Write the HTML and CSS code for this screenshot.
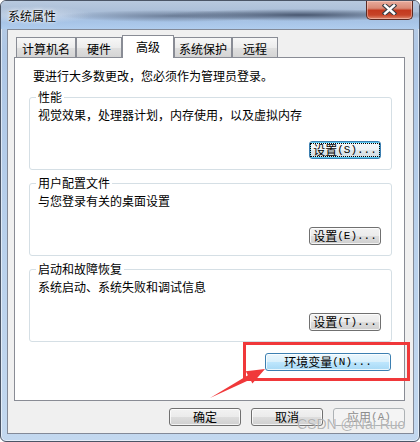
FILE: index.html
```html
<!DOCTYPE html>
<html lang="zh-CN">
<head>
<meta charset="utf-8">
<title>系统属性</title>
<link rel="stylesheet" href="styles.css">
</head>
<body>
<div class="window">
  <div class="titlebar">
    <span class="title">系统属性</span>
    <div class="close">
      <svg width="15" height="11" viewBox="0 0 15 11">
        <path d="M3 1.5 L12 9.5 M12 1.5 L3 9.5" stroke="#3b3f46" stroke-width="4.6" stroke-linecap="square" fill="none"/>
        <path d="M3 1.5 L12 9.5 M12 1.5 L3 9.5" stroke="#ffffff" stroke-width="2.4" stroke-linecap="square" fill="none"/>
      </svg>
    </div>
  </div>
  <div class="client">
    <div class="tabs">
      <div class="tab t1">计算机名</div>
      <div class="tab t2">硬件</div>
      <div class="tab t3 selected">高级</div>
      <div class="tab t4">系统保护</div>
      <div class="tab t5">远程</div>
    </div>
    <div class="panel">
      <p class="note">要进行大多数更改，您必须作为管理员登录。</p>
      <div class="group">
        <div class="group-label">性能</div>
        <div class="group-text">视觉效果，处理器计划，内存使用，以及虚拟内存</div>
        <div class="group-actions">
          <button class="btn btn-focus"><span class="focus-ring">设置<span class="m">(S)...</span></span></button>
        </div>
      </div>
      <div class="group">
        <div class="group-label">用户配置文件</div>
        <div class="group-text">与您登录有关的桌面设置</div>
        <div class="group-actions">
          <button class="btn">设置<span class="m">(E)...</span></button>
        </div>
      </div>
      <div class="group">
        <div class="group-label">启动和故障恢复</div>
        <div class="group-text">系统启动、系统失败和调试信息</div>
        <div class="group-actions">
          <button class="btn">设置<span class="m">(T)...</span></button>
        </div>
      </div>
      <div class="env-row">
        <button class="btn btn-hover env">环境变量<span class="m">(N)...</span></button>
      </div>
    </div>
    <div class="dialog-buttons">
      <button class="btn">确定</button>
      <button class="btn">取消</button>
      <button class="btn disabled">应用<span class="m">(A)</span></button>
    </div>
  </div>
</div>
<div class="red-box"></div>
<svg class="arrow" width="70" height="45" viewBox="200 360 70 45">
  <polygon points="210,398 247.9,375.2 245.8,371.2 265,369 252.4,383.6 250.3,379.6" fill="#f0383a"/>
</svg>
<div class="watermark">CSDN @Nai Ruo</div>
</body>
</html>
```
FILE: styles.css
```css
* { box-sizing: border-box; }
html, body { margin: 0; padding: 0; }
body {
  position: relative;
  width: 420px;
  height: 442px;
  overflow: hidden;
  background: #ffffff;
  font-family: "Noto Sans CJK SC", "Noto Sans", sans-serif;
  font-size: 12px;
  color: #000;
}
.window {
  width: 420px;
  height: 442px;
  border: 1px solid #4b5566;
  border-radius: 6px;
  background: linear-gradient(180deg, #bccde2 0%, #aec7e6 12%, #b9d1ec 55%, #c3d8ef 100%);
  box-shadow: inset 0 0 0 1px rgba(255,255,255,.55);
  display: flex;
  flex-direction: column;
  overflow: hidden;
}
.titlebar {
  height: 28px;
  display: flex;
  align-items: flex-start;
  padding-left: 7px;
  background:
    radial-gradient(ellipse 140px 6px at 300px 14px, rgba(62,76,100,.9), rgba(62,76,100,0) 100%),
    radial-gradient(ellipse 110px 6px at 170px 15px, rgba(85,100,125,.7), rgba(85,100,125,0) 100%),
    radial-gradient(ellipse 60px 9px at 32px 14px, rgba(235,240,248,.55), rgba(235,240,248,0) 100%),
    linear-gradient(180deg, #b8c9de 0%, #aabed8 40%, #a7c4e7 75%, #b0cdee 100%);
}
.title {
  line-height: 14px;
  margin-top: 8px;
  color: #0b0b0b;
  text-shadow: 0 0 4px rgba(255,255,255,.9), 0 0 2px rgba(255,255,255,.9);
}
.close {
  margin-left: auto;
  margin-right: 6px;
  width: 47px;
  height: 19px;
  border: 1px solid #5b2a22;
  border-top: none;
  border-radius: 0 0 5px 5px;
  background: linear-gradient(180deg, #e8ab9c 0%, #d98a76 40%, #c3391e 52%, #c64428 78%, #df8a6f 100%);
  box-shadow: inset 0 0 0 1px rgba(255,220,210,.45);
  display: flex;
  align-items: center;
  justify-content: center;
}
.close svg { display: block; margin-top: -1px; }
.client {
  margin-left: 6px;
  width: 407px;
  height: 405px;
  border: 1px solid #838a98;
  background: #f0f0f0;
  padding: 5px 8px 7px 6px;
  display: flex;
  flex-direction: column;
}
.tabs {
  height: 22px;
  display: flex;
  align-items: flex-end;
  padding-left: 2px;
}
.tab {
  height: 20px;
  border: 1px solid #898c95;
  border-bottom: none;
  background: linear-gradient(180deg, #f7f7f7 0%, #ececec 50%, #e0e0e0 51%, #d4d4d4 100%);
  text-align: center;
  line-height: 14px;
  padding-top: 4px;
  white-space: nowrap;
}
.t1 { width: 60px; }
.t2 { width: 46px; }
.t3 { width: 52px; }
.t4 { width: 58px; }
.t5 { width: 46px; }
.tab.selected {
  position: relative;
  z-index: 1;
  height: 23px;
  margin-bottom: -1px;
  background: #ffffff;
  padding-top: 4px;
}
.panel {
  width: 391px;
  height: 344px;
  border: 1px solid #898c95;
  background: #ffffff;
  padding: 11px 12px 0 14px;
}
.note {
  margin: 0 0 0 4px;
  line-height: 14px;
}
.group {
  margin-top: 13px;
  border: 1px solid #d5dfe5;
  border-radius: 3px;
  padding: 0 10px 10px 0;
}
.note + .group { margin-top: 14px; }
.group-label {
  width: fit-content;
  margin: -8px 0 0 6px;
  padding: 0 2px;
  background: #ffffff;
  line-height: 14px;
}
.group-text {
  margin: 4px 0 0 8px;
  line-height: 14px;
}
.group-actions {
  margin-top: 19px;
  display: flex;
  justify-content: flex-end;
}
.btn {
  font-family: inherit;
  font-size: 12px;
  color: #000;
  margin: 0;
  padding: 0;
  width: 72px;
  height: 18px;
  line-height: 16px;
  border: 1px solid #707070;
  border-radius: 3px;
  background: linear-gradient(180deg, #f2f2f2 0%, #ebebeb 50%, #dddddd 51%, #cfcfcf 100%);
  box-shadow: inset 0 0 0 1px rgba(255,255,255,.75);
  display: flex;
  align-items: center;
  justify-content: center;
  white-space: nowrap;
}
.m {
  font-family: "Liberation Mono", monospace;
  font-size: 11px;
}
.btn-focus {
  border-color: #3c7fb1;
  background: linear-gradient(180deg, #f4f8fa 0%, #edf2f5 50%, #dfe6ea 51%, #d3dde2 100%);
  box-shadow: inset 0 0 0 1px #58c9f3;
}
.focus-ring {
  display: flex;
  align-items: center;
  height: 12px;
  padding: 0 2px;
  outline: 1px dotted #000;
  line-height: 12px;
}
.btn-hover {
  border-color: #3c7fb1;
  background: linear-gradient(180deg, #eaf6fd 0%, #d9f0fc 50%, #bee6fd 51%, #a7d9f5 100%);
}
.env-row {
  margin-top: 11px;
  display: flex;
  justify-content: flex-end;
}
.btn.env { width: 126px; margin-right: 1px; }
.dialog-buttons {
  margin-top: 7px;
  display: flex;
  justify-content: flex-end;
  gap: 10px;
}
.btn.disabled {
  color: #8d8d8d;
  border-color: #adb2b5;
  background: #f4f4f4;
  box-shadow: none;
}
.red-box {
  position: absolute;
  left: 243px;
  top: 342px;
  width: 167px;
  height: 39px;
  border: 3px solid #f0383a;
  pointer-events: none;
}
.arrow {
  position: absolute;
  left: 200px;
  top: 360px;
  pointer-events: none;
}
.watermark {
  position: absolute;
  left: 297px;
  top: 416px;
  font-family: "Liberation Sans", Arial, sans-serif;
  font-size: 14px;
  line-height: 17px;
  color: rgba(135,135,135,.6);
  text-shadow: 0 0 1px rgba(255,255,255,.8);
  white-space: nowrap;
  pointer-events: none;
}
```
